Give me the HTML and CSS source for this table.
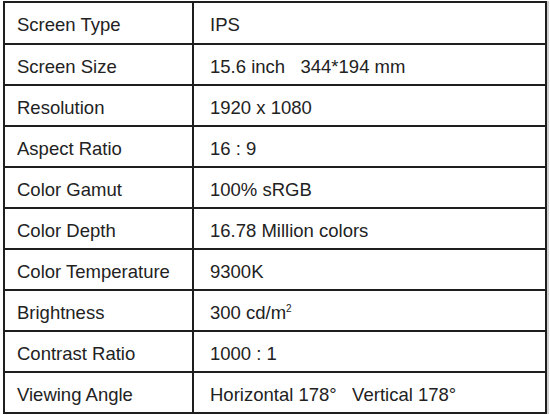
FILE: index.html
```html
<!DOCTYPE html>
<html>
<head>
<meta charset="utf-8">
<link rel="stylesheet" href="styles.css">
</head>
<body>
<table class="spec">
  <tbody>
    <tr class="first"><td class="label">Screen Type</td><td class="value">IPS</td></tr>
    <tr><td class="label">Screen Size</td><td class="value">15.6 inch&nbsp;&nbsp;&nbsp;344*194 mm</td></tr>
    <tr><td class="label">Resolution</td><td class="value">1920 x 1080</td></tr>
    <tr><td class="label">Aspect Ratio</td><td class="value">16 : 9</td></tr>
    <tr><td class="label">Color Gamut</td><td class="value">100% sRGB</td></tr>
    <tr><td class="label">Color Depth</td><td class="value">16.78 Million colors</td></tr>
    <tr><td class="label">Color Temperature</td><td class="value">9300K</td></tr>
    <tr><td class="label">Brightness</td><td class="value">300 cd/m<sup class="sup">2</sup></td></tr>
    <tr><td class="label">Contrast Ratio</td><td class="value">1000 : 1</td></tr>
    <tr><td class="label">Viewing Angle</td><td class="value">Horizontal 178°&nbsp;&nbsp;&nbsp;Vertical 178°</td></tr>
  </tbody>
</table>
</body>
</html>
```

FILE: styles.css
```css
html, body {
  margin: 0;
  padding: 0;
  background: #ffffff;
}

body {
  font-family: "Liberation Sans", Arial, sans-serif;
  color: #222222;
}

.spec {
  margin: 1px 0 0 3px;
  width: 544px;
  border-collapse: separate;
  border-spacing: 0;
  border-left: 2px solid #1e1e1e;
  border-top: 2px solid #1e1e1e;
  box-shadow: 2px 0 0 0 #d0d0d0;
}

.spec td {
  height: 35px;
  padding: 4px 0 0 0;
  border-right: 2px solid #1e1e1e;
  border-bottom: 2px solid #1e1e1e;
  font-size: 18.5px;
  line-height: 20px;
  vertical-align: middle;
  white-space: nowrap;
}

.spec tr.first td {
  height: 36px;
}

.label {
  width: 175px;
  padding-left: 12px !important;
}

.value {
  padding-left: 16px !important;
}

.sup {
  font-size: 10px;
  vertical-align: 7px;
  line-height: 0;
}
```
